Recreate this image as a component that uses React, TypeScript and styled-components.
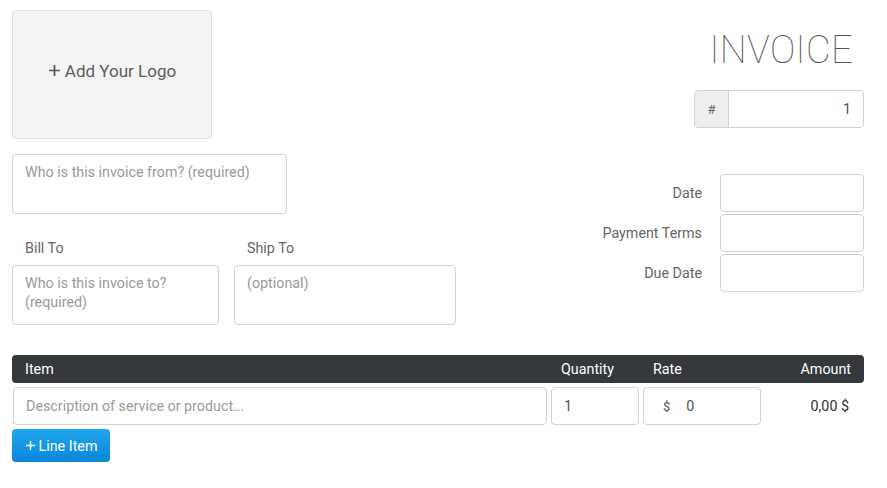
import React from "react";
import styled, { createGlobalStyle } from "styled-components";

const GlobalStyle = createGlobalStyle`
  body {
    margin: 0;
    background: #fff;
    font-family: Roboto, "Liberation Sans", sans-serif;
    font-size: 14.3px;
    color: #555;
  }
  * { box-sizing: border-box; }
`;

const Page = styled.div`
  width: 887px;
  padding: 10px 23px 0 12px;
`;

const TopRow = styled.div`
  display: flex;
  justify-content: space-between;
`;

const LeftCol = styled.div`
  display: flex;
  flex-direction: column;
  width: 444px;
`;

const RightCol = styled.div`
  display: flex;
  flex-direction: column;
  align-items: flex-end;
`;

const LogoBox = styled.div`
  width: 200px;
  height: 129px;
  padding-bottom: 8px;
  background: #f4f4f4;
  border: 1px solid #e1e1e1;
  border-radius: 4px;
  display: flex;
  align-items: center;
  justify-content: center;
  gap: 4px;
  font-size: 17px;
  color: #5c5c5c;
`;

const TextBox = styled.textarea<{ $w: number }>`
  width: ${(p) => p.$w}px;
  height: 60px;
  padding: 8px 12px;
  border: 1px solid #d2d2d2;
  border-radius: 4px;
  font-family: inherit;
  font-size: 14.3px;
  line-height: 19px;
  color: #555;
  resize: none;
  outline: none;
  &::placeholder { color: #9a9a9a; }
`;

const FromBox = styled(TextBox)`
  margin-top: 15px;
`;

const PartyRow = styled.div`
  display: flex;
  gap: 15px;
  margin-top: 24px;
`;

const Party = styled.div`
  display: flex;
  flex-direction: column;
`;

const PartyLabel = styled.div`
  padding-left: 13px;
  line-height: 20px;
  margin-bottom: 7px;
  color: #666;
`;

const Title = styled.h1`
  margin: 18px 11px 0 0;
  font-family: Roboto, "Liberation Sans", sans-serif;
  font-weight: 100;
  font-size: 38px;
  line-height: 45px;
  color: #555;
  letter-spacing: 0.4px;
`;

const NumberGroup = styled.div`
  display: flex;
  width: 170px;
  height: 38px;
  margin-top: 17px;
  border: 1px solid #d2d2d2;
  border-radius: 4px;
  overflow: hidden;
`;

const Addon = styled.span`
  width: 34px;
  display: flex;
  align-items: center;
  justify-content: center;
  background: #eee;
  border-right: 1px solid #d2d2d2;
  font-size: 13px;
  color: #666;
`;

const PlainInput = styled.input<{ $align?: string }>`
  flex: 1;
  min-width: 0;
  border: none;
  outline: none;
  padding: 0 12px;
  font-family: inherit;
  font-size: 14.3px;
  color: #555;
  text-align: ${(p) => p.$align || "left"};
  background: transparent;
  &::placeholder { color: #9a9a9a; }
`;

const MetaGrid = styled.div`
  display: grid;
  grid-template-columns: auto 144px;
  column-gap: 18px;
  row-gap: 2px;
  align-items: center;
  margin-top: 46px;
`;

const MetaLabel = styled.label`
  color: #666;
  text-align: right;
`;

const BoxInput = styled.input`
  height: 38px;
  width: 100%;
  border: 1px solid #d2d2d2;
  border-radius: 4px;
  padding: 0 12px;
  font-family: inherit;
  font-size: 14.3px;
  color: #555;
  outline: none;
  &::placeholder { color: #9a9a9a; }
`;

const Table = styled.div`
  margin-top: 30px;
  width: 852px;
`;

const Head = styled.div`
  display: grid;
  grid-template-columns: 535px 88px 118px 1fr;
  column-gap: 4px;
  height: 28px;
  align-items: center;
  background: #35383d;
  border-radius: 4px;
  color: #fff;
`;

const HeadCell = styled.div<{ $pad?: number; $right?: boolean }>`
  padding-left: ${(p) => p.$pad ?? 10}px;
  padding-right: ${(p) => (p.$right ? 13 : 0)}px;
  text-align: ${(p) => (p.$right ? "right" : "left")};
`;

const ItemRow = styled.div`
  display: grid;
  grid-template-columns: 534px 88px 118px 1fr;
  column-gap: 4px;
  margin-top: 4px;
  padding-left: 1px;
  align-items: center;
`;

const RateBox = styled.div`
  display: flex;
  align-items: center;
  height: 38px;
  border: 1px solid #d2d2d2;
  border-radius: 4px;
  padding-left: 19px;
  font-size: 13px;
  color: #555;
  input { padding-left: 16px; }
`;

const Amount = styled.div`
  text-align: right;
  padding-right: 15px;
  color: #333;
`;

const AddButton = styled.button`
  margin-top: 4px;
  width: 98px;
  height: 33px;
  border: none;
  border-radius: 4px;
  background: linear-gradient(#1fa6ec, #0a86d8);
  color: #fff;
  font-family: inherit;
  font-size: 14.3px;
  display: flex;
  align-items: center;
  justify-content: center;
  gap: 3px;
  box-shadow: 0 1px 1px rgba(0, 0, 0, 0.1);
`;

const Plus = ({ size, color }: { size: number; color: string }) => (
  <svg width={size} height={size} viewBox="0 0 12 12">
    <path d="M6 1v10M1 6h10" stroke={color} strokeWidth="1.6" />
  </svg>
);

export default function App() {
  return (
    <Page>
      <GlobalStyle />
      <TopRow>
        <LeftCol>
          <LogoBox>
            <Plus size={13} color="#555" />
            Add Your Logo
          </LogoBox>
          <FromBox $w={275} placeholder="Who is this invoice from? (required)" />
          <PartyRow>
            <Party>
              <PartyLabel>Bill To</PartyLabel>
              <TextBox $w={207} placeholder="Who is this invoice to? (required)" />
            </Party>
            <Party>
              <PartyLabel>Ship To</PartyLabel>
              <TextBox $w={222} placeholder="(optional)" />
            </Party>
          </PartyRow>
        </LeftCol>
        <RightCol>
          <Title>INVOICE</Title>
          <NumberGroup>
            <Addon>#</Addon>
            <PlainInput $align="right" defaultValue="1" />
          </NumberGroup>
          <MetaGrid>
            <MetaLabel>Date</MetaLabel>
            <BoxInput />
            <MetaLabel>Payment Terms</MetaLabel>
            <BoxInput />
            <MetaLabel>Due Date</MetaLabel>
            <BoxInput />
          </MetaGrid>
        </RightCol>
      </TopRow>

      <Table>
        <Head>
          <HeadCell $pad={13}>Item</HeadCell>
          <HeadCell>Quantity</HeadCell>
          <HeadCell>Rate</HeadCell>
          <HeadCell $right>Amount</HeadCell>
        </Head>
        <ItemRow>
          <BoxInput placeholder="Description of service or product..." />
          <BoxInput defaultValue="1" />
          <RateBox>
            $
            <PlainInput defaultValue="0" />
          </RateBox>
          <Amount>0,00 $</Amount>
        </ItemRow>
        <AddButton>
          <Plus size={11} color="#fff" />
          Line Item
        </AddButton>
      </Table>
    </Page>
  );
}
